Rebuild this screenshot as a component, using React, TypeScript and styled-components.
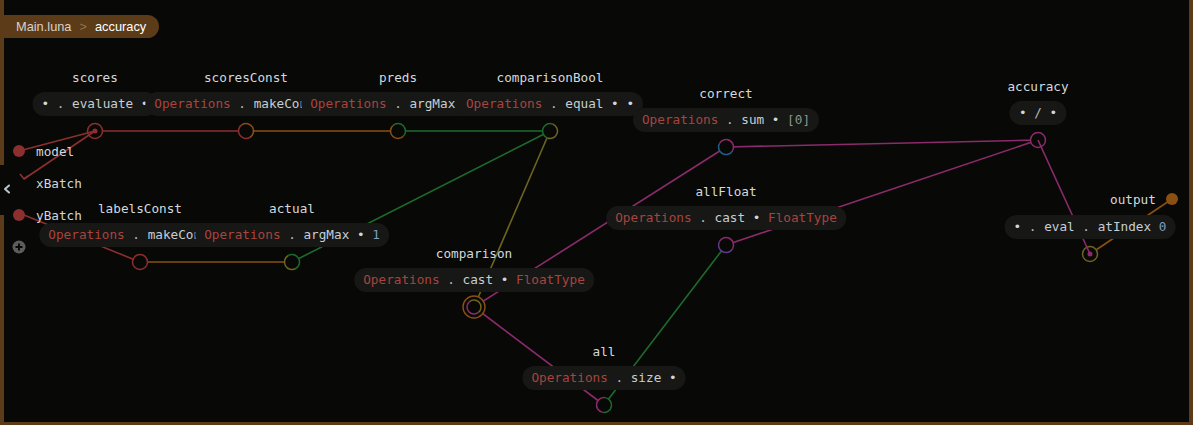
import React from 'react'
import styled, { createGlobalStyle } from 'styled-components'

const BG = '#080806'
const BROWN = '#5c3b18'
const RAIL = 4

const C = {
  red: '#8c2f2f',
  orange: '#8b4f12',
  green: '#1d6b2c',
  olive: '#6d6421',
  magenta: '#8b2b6c',
  blue: '#1f5f8c',
  purple: '#5b3a8c',
}

const GlobalStyle = createGlobalStyle`
  html, body {
    margin: 0;
    padding: 0;
    background: ${BG};
  }
  body {
    font-family: 'DejaVu Sans Mono', 'Liberation Mono', monospace;
  }
`

const Canvas = styled.div`
  position: relative;
  display: flex;
  width: 1193px;
  height: 425px;
  box-sizing: border-box;
  background: ${BG};
  border-right: 4px solid ${BROWN};
  border-bottom: 3px solid ${BROWN};
  overflow: hidden;
`

const Rail = styled.div`
  width: ${RAIL}px;
  flex: none;
  display: flex;
  flex-direction: column;
`

const RailPart = styled.div<{ $h?: number }>`
  background: ${BROWN};
  ${({ $h }) => ($h ? `height: ${$h}px; flex: none;` : 'flex: 1;')}
`

const Handle = styled.div`
  height: 50px;
  flex: none;
  display: flex;
  align-items: center;
  padding-left: 2px;
  color: #b9c4cf;

  svg {
    flex: none;
    margin-top: -2px;
  }
`

const Graph = styled.div`
  position: relative;
  flex: 1;
`

const Wires = styled.svg`
  position: absolute;
  inset: 0;
  width: 100%;
  height: 100%;
`

const Breadcrumb = styled.div`
  position: absolute;
  top: 15px;
  left: 0;
  height: 23px;
  display: flex;
  align-items: center;
  gap: 8px;
  padding: 0 13px 0 16px;
  background: ${BROWN};
  border-radius: 0 12px 12px 0;
  font-family: 'Liberation Sans', Arial, sans-serif;
  font-size: 12.8px;
  color: #d9d6d0;
`

const Crumb = styled.span<{ $active?: boolean }>`
  color: ${({ $active }) => ($active ? '#ffffff' : '#d6d2cc')};
`

const Sep = styled.span`
  color: #8f7452;
`

const Inputs = styled.div`
  position: absolute;
  left: ${12 - RAIL}px;
  top: 135px;
  display: flex;
  flex-direction: column;
`

const InputRow = styled.div`
  height: 32px;
  display: flex;
  align-items: center;
  gap: 10px;
  font-size: 12.7px;
  color: #cfd6dc;
`

const DotSlot = styled.span`
  width: 14px;
  height: 14px;
  flex: none;
  display: flex;
  align-items: center;
  justify-content: center;
`

const Dot = styled.span<{ $color: string }>`
  width: 12px;
  height: 12px;
  border-radius: 50%;
  background: ${({ $color }) => $color};
`

const NodeBox = styled.div`
  position: absolute;
  transform: translateX(-50%);
  display: flex;
  flex-direction: column;
  align-items: center;
  gap: 6px;
`

const Label = styled.div`
  height: 16px;
  line-height: 16px;
  font-size: 12.7px;
  color: #d3d9de;
  white-space: nowrap;
`

const Pill = styled.div`
  height: 24px;
  line-height: 24px;
  padding: 0 9px;
  border-radius: 12px;
  background: #171715;
  font-size: 12.7px;
  white-space: pre;
`

type Kind = 'op' | 'dot' | 'name' | 'bullet' | 'num' | 'lit' | 'type'

const tokenColors: Record<Kind, string> = {
  op: '#a8443e',
  dot: '#b4bcc2',
  name: '#c6ced4',
  bullet: '#d0d6dc',
  num: '#7f9fc0',
  lit: '#8e958e',
  type: '#a8443e',
}

const Token = styled.span<{ $kind: Kind }>`
  color: ${({ $kind }) => tokenColors[$kind]};
`

const OutputPort = styled.div`
  position: absolute;
  left: ${1110 - RAIL}px;
  top: 191px;
  height: 16px;
  display: flex;
  align-items: center;
  gap: 10px;
  font-size: 12.7px;
  color: #d3d9de;
`

type Tok = [Kind, string]

const OPS: Tok = ['op', 'Operations']
const DOT: Tok = ['dot', ' . ']

type NodeData = { name?: string; cx: number; py: number; toks: Tok[] }

// later nodes sit on top of earlier ones, as in the editor
const nodes: NodeData[] = [
  { name: 'scores', cx: 95, py: 104, toks: [['bullet', '•'], DOT, ['name', 'evaluate'], ['bullet', ' •']] },
  { name: 'scoresConst', cx: 246, py: 104, toks: [OPS, DOT, ['name', 'makeConst'], ['bullet', ' •']] },
  { name: 'preds', cx: 398, py: 104, toks: [OPS, DOT, ['name', 'argMax'], ['bullet', ' • '], ['num', '1']] },
  { name: 'comparisonBool', cx: 550, py: 104, toks: [OPS, DOT, ['name', 'equal'], ['bullet', ' • •']] },
  { name: 'correct', cx: 726, py: 120, toks: [OPS, DOT, ['name', 'sum'], ['bullet', ' • '], ['lit', '[0]']] },
  { name: 'accuracy', cx: 1038, py: 113, toks: [['bullet', '•'], ['dot', ' / '], ['bullet', '•']] },
  { name: 'allFloat', cx: 726, py: 218, toks: [OPS, DOT, ['name', 'cast'], ['bullet', ' • '], ['type', 'FloatType']] },
  { name: 'labelsConst', cx: 140, py: 235, toks: [OPS, DOT, ['name', 'makeConst'], ['bullet', ' •']] },
  { name: 'actual', cx: 292, py: 235, toks: [OPS, DOT, ['name', 'argMax'], ['bullet', ' • '], ['num', '1']] },
  { name: 'comparison', cx: 474, py: 280, toks: [OPS, DOT, ['name', 'cast'], ['bullet', ' • '], ['type', 'FloatType']] },
  { name: 'all', cx: 604, py: 378, toks: [OPS, DOT, ['name', 'size'], ['bullet', ' •']] },
  { cx: 1090, py: 227, toks: [['bullet', '•'], DOT, ['name', 'eval'], DOT, ['name', 'atIndex'], ['num', ' 0']] },
]

const edges: [number, number, number, number, string][] = [
  [19, 213, 140, 262, C.red],
  [95, 131, 246, 131, C.red],
  [246, 131, 398, 131, C.orange],
  [398, 131, 550, 131, C.green],
  [550, 131, 292, 262, C.green],
  [550, 131, 474, 307, C.olive],
  [140, 262, 292, 262, C.orange],
  [474, 307, 726, 147, C.magenta],
  [474, 307, 604, 405, C.magenta],
  [604, 405, 726, 245, C.green],
  [726, 147, 1038, 140, C.magenta],
  [726, 245, 1038, 140, C.magenta],
  [1090, 254, 1172, 199, C.orange],
]

function Port({ x, y, a, b, rot = 0, r = 7.5 }: { x: number; y: number; a: string; b: string; rot?: number; r?: number }) {
  return (
    <g transform={`rotate(${rot} ${x} ${y})`}>
      <circle cx={x} cy={y} r={r} fill={BG} />
      <path d={`M ${x} ${y - r} A ${r} ${r} 0 0 0 ${x} ${y + r}`} stroke={a} strokeWidth={1.5} fill="none" />
      <path d={`M ${x} ${y + r} A ${r} ${r} 0 0 0 ${x} ${y - r}`} stroke={b} strokeWidth={1.5} fill="none" />
    </g>
  )
}

function Node({ name, cx, py, toks }: NodeData) {
  return (
    <NodeBox style={{ left: cx - RAIL, top: py - (name ? 34 : 12) }}>
      {name && <Label>{name}</Label>}
      <Pill>
        {toks.map(([k, t], i) => (
          <Token key={i} $kind={k}>{t}</Token>
        ))}
      </Pill>
    </NodeBox>
  )
}

export default function App() {
  return (
    <>
      <GlobalStyle />
      <Canvas>
        <Rail>
          <RailPart $h={165} />
          <Handle>
            <svg width="10" height="12" viewBox="0 0 10 12">
              <polyline points="7,2.5 3,6 7,9.5" fill="none" stroke="currentColor" strokeWidth="2" strokeLinecap="round" strokeLinejoin="round" />
            </svg>
          </Handle>
          <RailPart />
        </Rail>
        <Graph>
          <Wires>
            <g transform={`translate(${-RAIL} 0)`}>
              {edges.map(([x1, y1, x2, y2, c], i) => (
                <line key={i} x1={x1} y1={y1} x2={x2} y2={y2} stroke={c} strokeWidth={1.6} />
              ))}
              <Port x={95} y={131} a={C.red} b={C.red} />
              <Port x={246} y={131} a={C.red} b={C.orange} rot={-30} />
              <Port x={398} y={131} a={C.orange} b={C.green} rot={-45} />
              <Port x={550} y={131} a={C.green} b={C.olive} rot={20} />
              <Port x={726} y={147} a={C.blue} b={C.magenta} rot={-60} />
              <Port x={1038} y={140} a={C.magenta} b={C.magenta} />
              <Port x={726} y={245} a={C.purple} b={C.magenta} rot={-60} />
              <Port x={140} y={262} a={C.red} b={C.red} />
              <Port x={292} y={262} a={C.olive} b={C.green} rot={-30} />
              <circle cx={474} cy={307} r={11} fill={BG} stroke={C.orange} strokeWidth={1.4} />
              <Port x={474} y={307} a={C.magenta} b={C.olive} rot={-40} r={7} />
              <Port x={604} y={405} a={C.magenta} b={C.green} rot={10} />
              <Port x={1090} y={254} a={C.olive} b={C.olive} />

              <line x1={19} y1={151} x2={95} y2={131} stroke={C.red} strokeWidth={1.6} />
              <line x1={95} y1={131} x2={24} y2={179} stroke={C.red} strokeWidth={1.6} />
              <polyline points="20,174 24,179 28,176" fill="none" stroke={C.red} strokeWidth={1.6} />
              <circle cx={95} cy={131} r={2.5} fill={C.red} />
              <line x1={1038} y1={140} x2={1090} y2={254} stroke={C.magenta} strokeWidth={1.6} />
              <circle cx={1090} cy={254} r={2.5} fill={C.magenta} />
            </g>
          </Wires>

          <Inputs>
            <InputRow>
              <DotSlot><Dot $color={C.red} /></DotSlot>
              model
            </InputRow>
            <InputRow>
              <DotSlot />
              xBatch
            </InputRow>
            <InputRow>
              <DotSlot><Dot $color={C.red} /></DotSlot>
              yBatch
            </InputRow>
            <InputRow>
              <DotSlot>
                <svg width="14" height="14" viewBox="0 0 14 14">
                  <circle cx="7" cy="7" r="6.5" fill="#5d5d5b" />
                  <path d="M7 3.5v7M3.5 7h7" stroke={BG} strokeWidth="2" />
                </svg>
              </DotSlot>
            </InputRow>
          </Inputs>

          {nodes.map(n => (
            <Node key={`${n.name}-${n.cx}`} {...n} />
          ))}

          <OutputPort>
            output
            <Dot $color={C.orange} />
          </OutputPort>
        </Graph>

        <Breadcrumb>
          <Crumb>Main.luna</Crumb>
          <Sep>&gt;</Sep>
          <Crumb $active>accuracy</Crumb>
        </Breadcrumb>
      </Canvas>
    </>
  )
}
